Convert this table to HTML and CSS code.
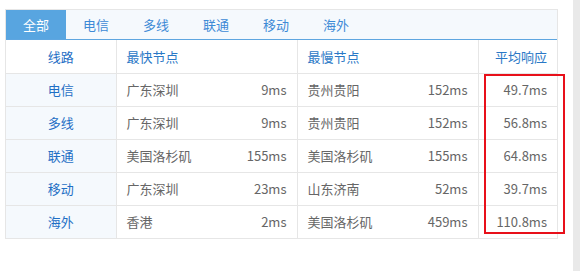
FILE: index.html
```html
<!DOCTYPE html>
<html lang="zh">
<head>
<meta charset="utf-8">
<link rel="stylesheet" href="styles.css">
</head>
<body>
<div class="page">
  <main class="main">
    <div class="panel">
      <div class="tabs">
        <span class="tab active">全部</span>
        <span class="tab">电信</span>
        <span class="tab">多线</span>
        <span class="tab">联通</span>
        <span class="tab">移动</span>
        <span class="tab">海外</span>
      </div>
      <div class="table-wrap">
        <table class="grid">
          <colgroup>
            <col class="c1"><col class="c2"><col class="c3"><col class="c4">
          </colgroup>
          <thead>
            <tr>
              <th class="line">线路</th>
              <th class="left">最快节点</th>
              <th class="left">最慢节点</th>
              <th class="right">平均响应</th>
            </tr>
          </thead>
          <tbody>
            <tr><td class="line">电信</td><td><div class="pair"><span>广东深圳</span><span>9ms</span></div></td><td><div class="pair"><span>贵州贵阳</span><span>152ms</span></div></td><td class="right">49.7ms</td></tr>
            <tr><td class="line">多线</td><td><div class="pair"><span>广东深圳</span><span>9ms</span></div></td><td><div class="pair"><span>贵州贵阳</span><span>152ms</span></div></td><td class="right">56.8ms</td></tr>
            <tr><td class="line">联通</td><td><div class="pair"><span>美国洛杉矶</span><span>155ms</span></div></td><td><div class="pair"><span>美国洛杉矶</span><span>155ms</span></div></td><td class="right">64.8ms</td></tr>
            <tr><td class="line">移动</td><td><div class="pair"><span>广东深圳</span><span>23ms</span></div></td><td><div class="pair"><span>山东济南</span><span>52ms</span></div></td><td class="right">39.7ms</td></tr>
            <tr><td class="line">海外</td><td><div class="pair"><span>香港</span><span>2ms</span></div></td><td><div class="pair"><span>美国洛杉矶</span><span>459ms</span></div></td><td class="right">110.8ms</td></tr>
          </tbody>
        </table>
        <div class="highlight"></div>
      </div>
    </div>
  </main>
  <aside class="scroll"></aside>
</div>
</body>
</html>
```

FILE: styles.css
```css
html, body {
  margin: 0;
  padding: 0;
  height: 100%;
  background: #fff;
}
body {
  font-family: "Noto Sans CJK SC", "Noto Sans", sans-serif;
  font-size: 13px;
  color: #666;
}
.page {
  display: flex;
  height: 100%;
}
.main {
  flex: 1;
  padding: 9px 0 0 5px;
}
.scroll {
  width: 7px;
  background: #e9e9e9;
}
.panel {
  width: 551px;
  border: 1px solid #e6e6e6;
}
.tabs {
  display: flex;
  height: 29px;
  background: #f5f9fd;
  border-bottom: 1px solid #5ea6e0;
}
.tab {
  width: 60px;
  display: flex;
  align-items: center;
  justify-content: center;
  color: #3d8ad6;
  line-height: 1;
}
.tab.active {
  background: #58a5e0;
  color: #fff;
}
.table-wrap {
  position: relative;
}
.grid {
  width: 551px;
  border-collapse: collapse;
  table-layout: fixed;
}
.c1 { width: 110px; }
.c2 { width: 181px; }
.c3 { width: 181px; }
.c4 { width: 79px; }
.grid th, .grid td {
  height: 33px;
  padding: 0 10px;
  border: 1px solid #e6e6e6;
  font-weight: normal;
  line-height: 1;
  box-sizing: border-box;
}
.grid tr:first-child th { border-top: 0; }
.grid tr > :first-child { border-left: 0; }
.grid tr > :last-child { border-right: 0; }
.grid tbody tr:last-child td { border-bottom: 0; }
.grid th { color: #2a78c6; }
.grid th.left { text-align: left; }
.grid .right { text-align: right; }
.grid .line {
  text-align: center;
  color: #1f6fc5;
}
.grid td.line { background: #f5f9fd; }
.pair {
  display: flex;
  justify-content: space-between;
}
.highlight {
  position: absolute;
  left: 478px;
  top: 34px;
  width: 77px;
  height: 156px;
  border: 2px solid #e8101a;
}
```
